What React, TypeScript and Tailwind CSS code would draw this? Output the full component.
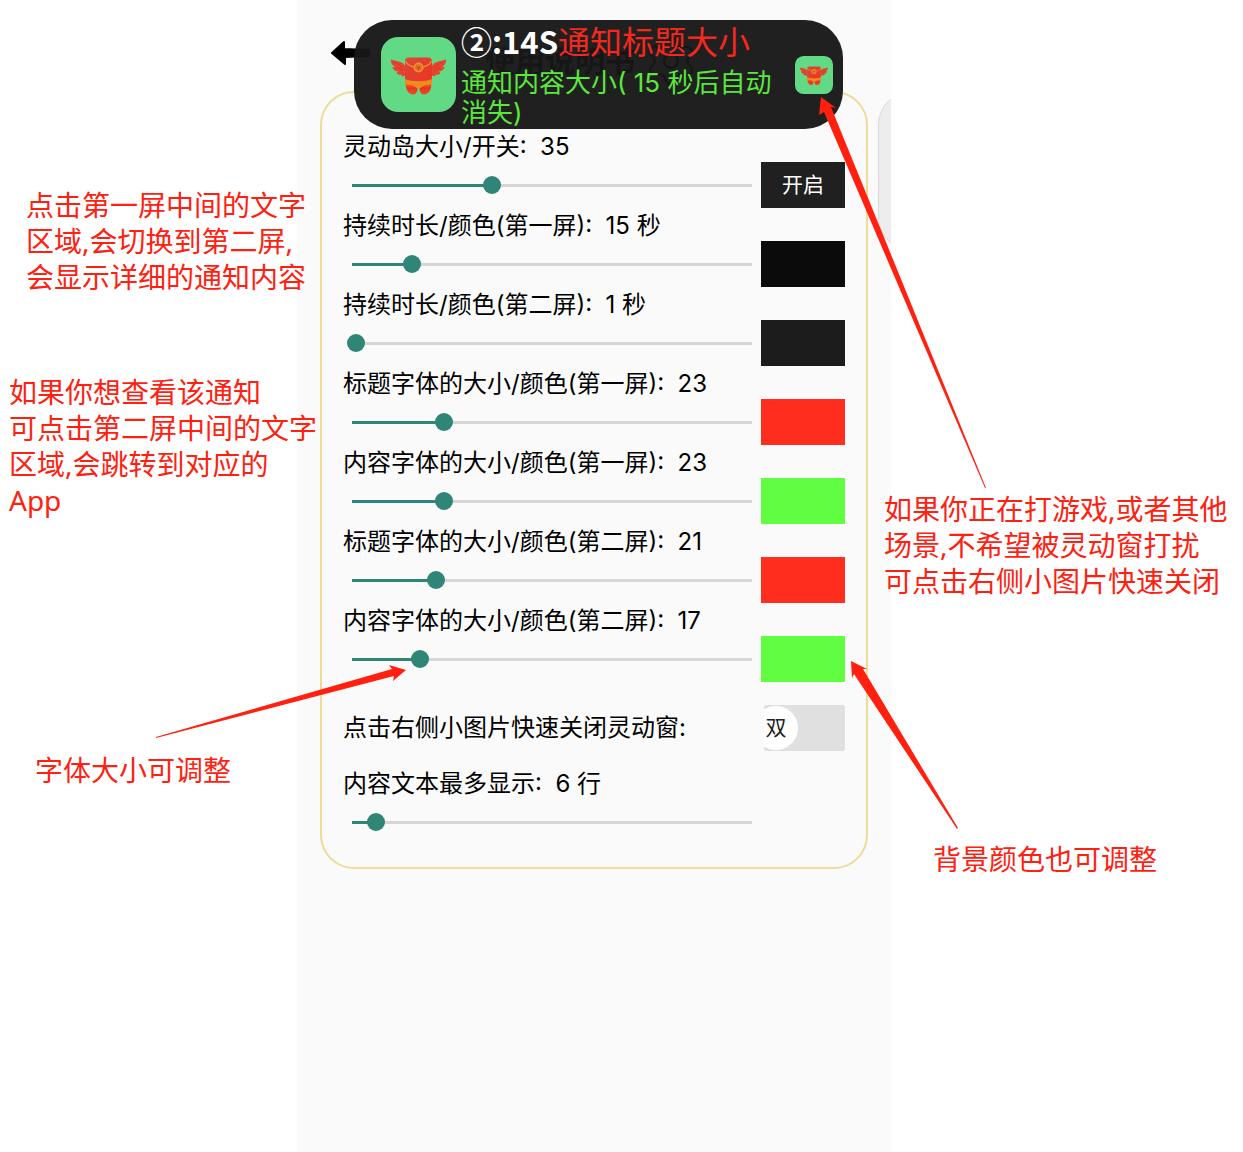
import { useState } from "react";
import type { ReactNode } from "react";
import { Settings } from "lucide-react";

type Setting = {
  id: string;
  label: string;
  value: number;
  unit?: string;
  swatch?: string;
  swatchText?: string;
};

const settings: Setting[] = [
  { id: "island", label: "灵动岛大小/开关", value: 35, swatch: "bg-[#202020]", swatchText: "开启" },
  { id: "time1", label: "持续时长/颜色(第一屏)", value: 15, unit: "秒", swatch: "bg-[#0b0b0b]" },
  { id: "time2", label: "持续时长/颜色(第二屏)", value: 1, unit: "秒", swatch: "bg-[#1c1c1c]" },
  { id: "title1", label: "标题字体的大小/颜色(第一屏)", value: 23, swatch: "bg-[#ff2d1e]" },
  { id: "body1", label: "内容字体的大小/颜色(第一屏)", value: 23, swatch: "bg-[#60fd40]" },
  { id: "title2", label: "标题字体的大小/颜色(第二屏)", value: 21, swatch: "bg-[#ff2d1e]" },
  { id: "body2", label: "内容字体的大小/颜色(第二屏)", value: 17, swatch: "bg-[#60fd40]" },
];

function SettingRow({ item }: { item: Setting }) {
  const [value, setValue] = useState(item.value);
  return (
    <div>
      <label htmlFor={item.id} className="block h-[33px] whitespace-pre text-2xl leading-9">
        {`${item.label}:  ${value}${item.unit ? " " + item.unit : ""}`}
      </label>
      <div className="grid h-[46px] grid-cols-[minmax(0,1fr)_84px] items-center">
        <input
          id={item.id}
          type="range"
          min={0}
          max={100}
          value={value}
          onChange={(e) => setValue(Number(e.target.value))}
          className="h-[18px] w-full cursor-pointer appearance-none bg-transparent bg-[length:calc(100%-18px)_3px] bg-center bg-no-repeat [&::-webkit-slider-thumb]:size-[18px] [&::-webkit-slider-thumb]:appearance-none [&::-webkit-slider-thumb]:rounded-full [&::-webkit-slider-thumb]:bg-[#2f8576]"
          style={{ backgroundImage: `linear-gradient(to right, #2f8576 ${value}%, #d6d6d6 ${value}%)` }}
        />
        {item.swatch && (
          <button
            type="button"
            aria-label={item.swatchText ?? `${item.label} 颜色`}
            className={`h-full text-[21px] text-white ${item.swatch}`}
          >
            {item.swatchText}
          </button>
        )}
      </div>
    </div>
  );
}

function Mascot({ className }: { className: string }) {
  return (
    <svg viewBox="0 0 75 75" className={className} aria-hidden="true">
      <defs>
        <linearGradient id="body" x1="0" y1="0" x2="1" y2="1">
          <stop offset="0" stopColor="#d8483b" />
          <stop offset="1" stopColor="#f0321f" />
        </linearGradient>
        <linearGradient id="leg" x1="0" y1="0" x2="0" y2="1">
          <stop offset="0" stopColor="#f0701e" />
          <stop offset="0.45" stopColor="#ee3020" />
          <stop offset="1" stopColor="#e8502a" />
        </linearGradient>
      </defs>
      <rect width="75" height="75" rx="17" fill="#62d985" />
      <g fill="#e8432f">
        <path d="M24 29C22 24 14 24 10 22.5C9.500 26 11.500 28.500 14 29.500C13 30 12 29.800 11.500 30C12 33 15 34.500 17.500 34.500C16.500 35 16 35.500 15.500 36C17 38 19.500 38 21 37.500C20.500 38 20.500 38.500 20.500 39C22 39.500 23 39 24 38.500Z" />
        <path d="M51 29C53 24 61 24 65 22.500C65.500 26 63.500 28.500 61 29.500C62 30 63 29.800 63.500 30C63 33 60 34.500 57.500 34.500C58.500 35 59 35.500 59.500 36C58 38 55.500 38 54 37.500C54.500 38 54.500 38.500 54.500 39C53 39.500 52 39 51 38.500Z" />
      </g>
      <path d="M13 25.500Q19 27 22 31M15 30.500Q19 31 22 34M62 25.500Q56 27 53 31M60 30.500Q56 31 53 34" stroke="#c93726" strokeWidth="0.7" fill="none" />
      <path d="M24.500 46C24.500 53 28 57.500 32 57.500C36 57.500 37 53 36.500 48H38.500C38 53 39 57.500 43 57.500C47 57.500 50.500 53 50.500 46Z" fill="url(#leg)" />
      <rect x="24" y="20.500" width="27" height="26" rx="4" fill="url(#body)" />
      <path d="M24 42C31 45 44 45 51 42V47.500C47 47.500 42 48 39.500 51H35.500C33 48 28 47.500 24 47.500Z" fill="#f18a1f" />
      <path d="M24.500 24C26 28.500 31 30 37.500 30.500C44 30 49 28.500 50.500 24" fill="none" stroke="#f0902c" strokeWidth="1.2" />
      <circle cx="37.500" cy="30.500" r="5" fill="#f2912c" />
      <circle cx="37.500" cy="30.500" r="3.500" fill="#e9742a" />
      <path d="M35.500 28.500L37.500 31L39.500 28.500M35.500 31H39.500M37.500 31V33.500" stroke="#b5501c" strokeWidth="0.900" fill="none" />
    </svg>
  );
}

function Note({ className, children }: { className: string; children: ReactNode }) {
  return (
    <div
      className={`relative z-10 text-[28px] leading-9 whitespace-nowrap text-[#ff2010] ${className}`}
    >
      {children}
    </div>
  );
}

export default function App() {
  const [single, setSingle] = useState(false);
  return (
    <div className="grid min-h-screen grid-cols-[297fr_594fr_352fr] overflow-x-hidden bg-white font-[Inter,'Noto_Sans_CJK_SC',sans-serif] text-black">
      <aside className="flex min-w-0 flex-col pt-[187px] font-['Noto_Sans','Noto_Sans_CJK_SC',sans-serif]">
        <Note className="ml-[26px]">
          <p>点击第一屏中间的文字</p>
          <p>区域,会切换到第二屏,</p>
          <p>会显示详细的通知内容</p>
        </Note>
        <Note className="mt-[79px] ml-[9px]">
          <p>如果你想查看该通知</p>
          <p>可点击第二屏中间的文字</p>
          <p>区域,会跳转到对应的</p>
          <p>App</p>
        </Note>
        <Note className="mt-[234px] ml-[35px]">
          <p>字体大小可调整</p>
          <svg viewBox="0 0 252 76" className="absolute bottom-[50px] left-[120px] h-[76px] w-[252px]" aria-hidden="true">
            <path d="M251 8L234 3L237 7L1 75V76L239 14L238 19Z" fill="#ff2010" />
          </svg>
        </Note>
      </aside>

      <main className="relative min-w-0 bg-[#fafafa]">
        <header className="flex h-[91px] items-center pt-[30px] pl-[34px]">
          <button type="button" aria-label="返回" className="-mt-4 mr-[114px]">
            <svg viewBox="0 0 40 26" className="h-[26px] w-10" aria-hidden="true">
              <path d="M1 13L13 2V9L38 10V16L14 17V24Z" stroke="#000" strokeWidth="2" strokeLinejoin="round" />
            </svg>
          </button>
          <h1 className="text-3xl font-bold">使用说明书</h1>
          <Settings className="ml-2 size-14" strokeWidth={1} />
        </header>

        <div className="flex gap-[10px] overflow-hidden pl-[23px]">
          <section className="min-w-0 flex-1 rounded-[34px] border-2 border-[#eddc98] px-[21px] pt-9 pb-[22px]">
            {settings.map((item) => (
              <SettingRow key={item.id} item={item} />
            ))}
            <div className="mt-[23px] mb-[15px] flex h-[46px] items-center justify-between">
              <label htmlFor="close-mode" className="text-2xl">
                点击右侧小图片快速关闭灵动窗:
              </label>
              <label className="flex h-full w-[81px] cursor-pointer items-center overflow-hidden rounded-xs bg-[#e0e0e0]">
                <input
                  id="close-mode"
                  type="checkbox"
                  checked={single}
                  onChange={(e) => setSingle(e.target.checked)}
                  className="peer sr-only"
                />
                <span className="-ml-2.5 flex size-11 items-center justify-center rounded-full bg-white text-[21px] text-[#222] peer-checked:ml-12">
                  {single ? "单" : "双"}
                </span>
              </label>
            </div>
            <SettingRow item={{ id: "lines", label: "内容文本最多显示", value: 6, unit: "行" }} />
          </section>
          <div className="w-[13px] overflow-hidden">
            <div className="h-[160px] w-[548px] rounded-[34px] border border-[#d8d8d8] bg-[#ededed]" />
          </div>
        </div>

        <div
          role="status"
          className="absolute top-5 right-12 left-[57px] flex h-[109px] rounded-[38px] bg-[#171717]/96 pr-[10px] pl-[27px]"
        >
          <Mascot className="mt-[17px] size-[75px] shrink-0" />
          <div className="ml-[5px] min-w-0 flex-1">
            <p className="font-['Noto_Sans_CJK_SC',sans-serif] text-[32px] leading-10 whitespace-nowrap text-[#f5281e]">
              <b className="text-[31px] text-white">②:14S</b>通知标题大小
            </p>
            <p className="mt-[7px] text-[26px] leading-[30px] text-[#5be83c]">
              通知内容大小( 15 秒后自动消失)
            </p>
          </div>
          <button type="button" aria-label="关闭" className="ml-2 self-center">
            <Mascot className="size-[38px]" />
          </button>
        </div>
      </main>

      <aside className="flex min-w-0 flex-col pt-[491px] font-['Noto_Sans','Noto_Sans_CJK_SC',sans-serif]">
        <Note className="-ml-[7px]">
          <p>如果你正在打游戏,或者其他</p>
          <p>场景,不希望被灵动窗打扰</p>
          <p>可点击右侧小图片快速关闭</p>
          <svg viewBox="0 0 168 392" className="absolute bottom-[111px] -left-[65px] h-[392px] w-[168px]" aria-hidden="true">
            <path d="M2 1L17 12L12 11L167 392H166L5 16L0 19Z" fill="#ff2010" />
          </svg>
        </Note>
        <Note className="mt-[242px] ml-[42px]">
          <p>背景颜色也可调整</p>
          <svg viewBox="0 0 107 169" className="absolute bottom-12 -left-[82px] h-[169px] w-[107px]" aria-hidden="true">
            <path d="M0 1L16 9L12 9L107 168L106 169L3 14L1 18Z" fill="#ff2010" />
          </svg>
        </Note>
      </aside>
    </div>
  );
}
